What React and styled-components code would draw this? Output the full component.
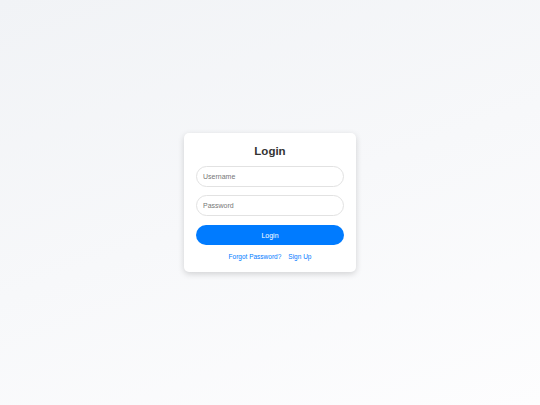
import React from "react";
import styled, { createGlobalStyle } from "styled-components";

const Global = createGlobalStyle`
  html, body { margin: 0; padding: 0; }
  body {
    font-family: "Liberation Sans", Arial, sans-serif;
    background: linear-gradient(160deg, #f1f3f6 0%, #f7f8fa 50%, #fdfdfe 100%);
    min-height: 100vh;
  }
  * { box-sizing: border-box; }
`;

const Page = styled.div`
  min-height: 100vh;
  display: flex;
  align-items: center;
  justify-content: center;
`;

const Card = styled.form`
  width: 172px;
  padding: 12px 12px 11px;
  background: #fff;
  border-radius: 5px;
  box-shadow: 0 2px 6px rgba(0, 0, 0, 0.16);
  display: flex;
  flex-direction: column;
`;

const Title = styled.h2`
  margin: 0 0 8px;
  font-size: 11.5px;
  line-height: 13px;
  font-weight: 700;
  color: #333;
  text-align: center;
`;

const Input = styled.input`
  width: 100%;
  height: 21px;
  padding: 0 6px;
  margin-bottom: ${(p) => p.$mb}px;
  font-family: "Liberation Sans", Arial, sans-serif;
  font-size: 7px;
  color: #333;
  border: 1px solid #e2e2e2;
  border-radius: 999px;
  outline: none;
  background: #fff;
  &::placeholder { color: #767676; }
`;

const Button = styled.button`
  width: 100%;
  height: 20px;
  border: none;
  border-radius: 999px;
  background: #007bff;
  color: #fff;
  font-family: "Liberation Sans", Arial, sans-serif;
  font-size: 7px;
  cursor: pointer;
`;

const Links = styled.div`
  margin-top: 7px;
  display: flex;
  justify-content: center;
  gap: 7px;
  line-height: 9px;
`;

const Link = styled.a`
  color: #007bff;
  font-size: 6.5px;
  text-decoration: none;
`;

export default function App() {
  return (
    <>
      <Global />
      <Page>
        <Card onSubmit={(e) => e.preventDefault()}>
          <Title>Login</Title>
          <Input type="text" placeholder="Username" $mb={8} />
          <Input type="password" placeholder="Password" $mb={9} />
          <Button type="submit">Login</Button>
          <Links>
            <Link href="#">Forgot Password?</Link>
            <Link href="#">Sign Up</Link>
          </Links>
        </Card>
      </Page>
    </>
  );
}
